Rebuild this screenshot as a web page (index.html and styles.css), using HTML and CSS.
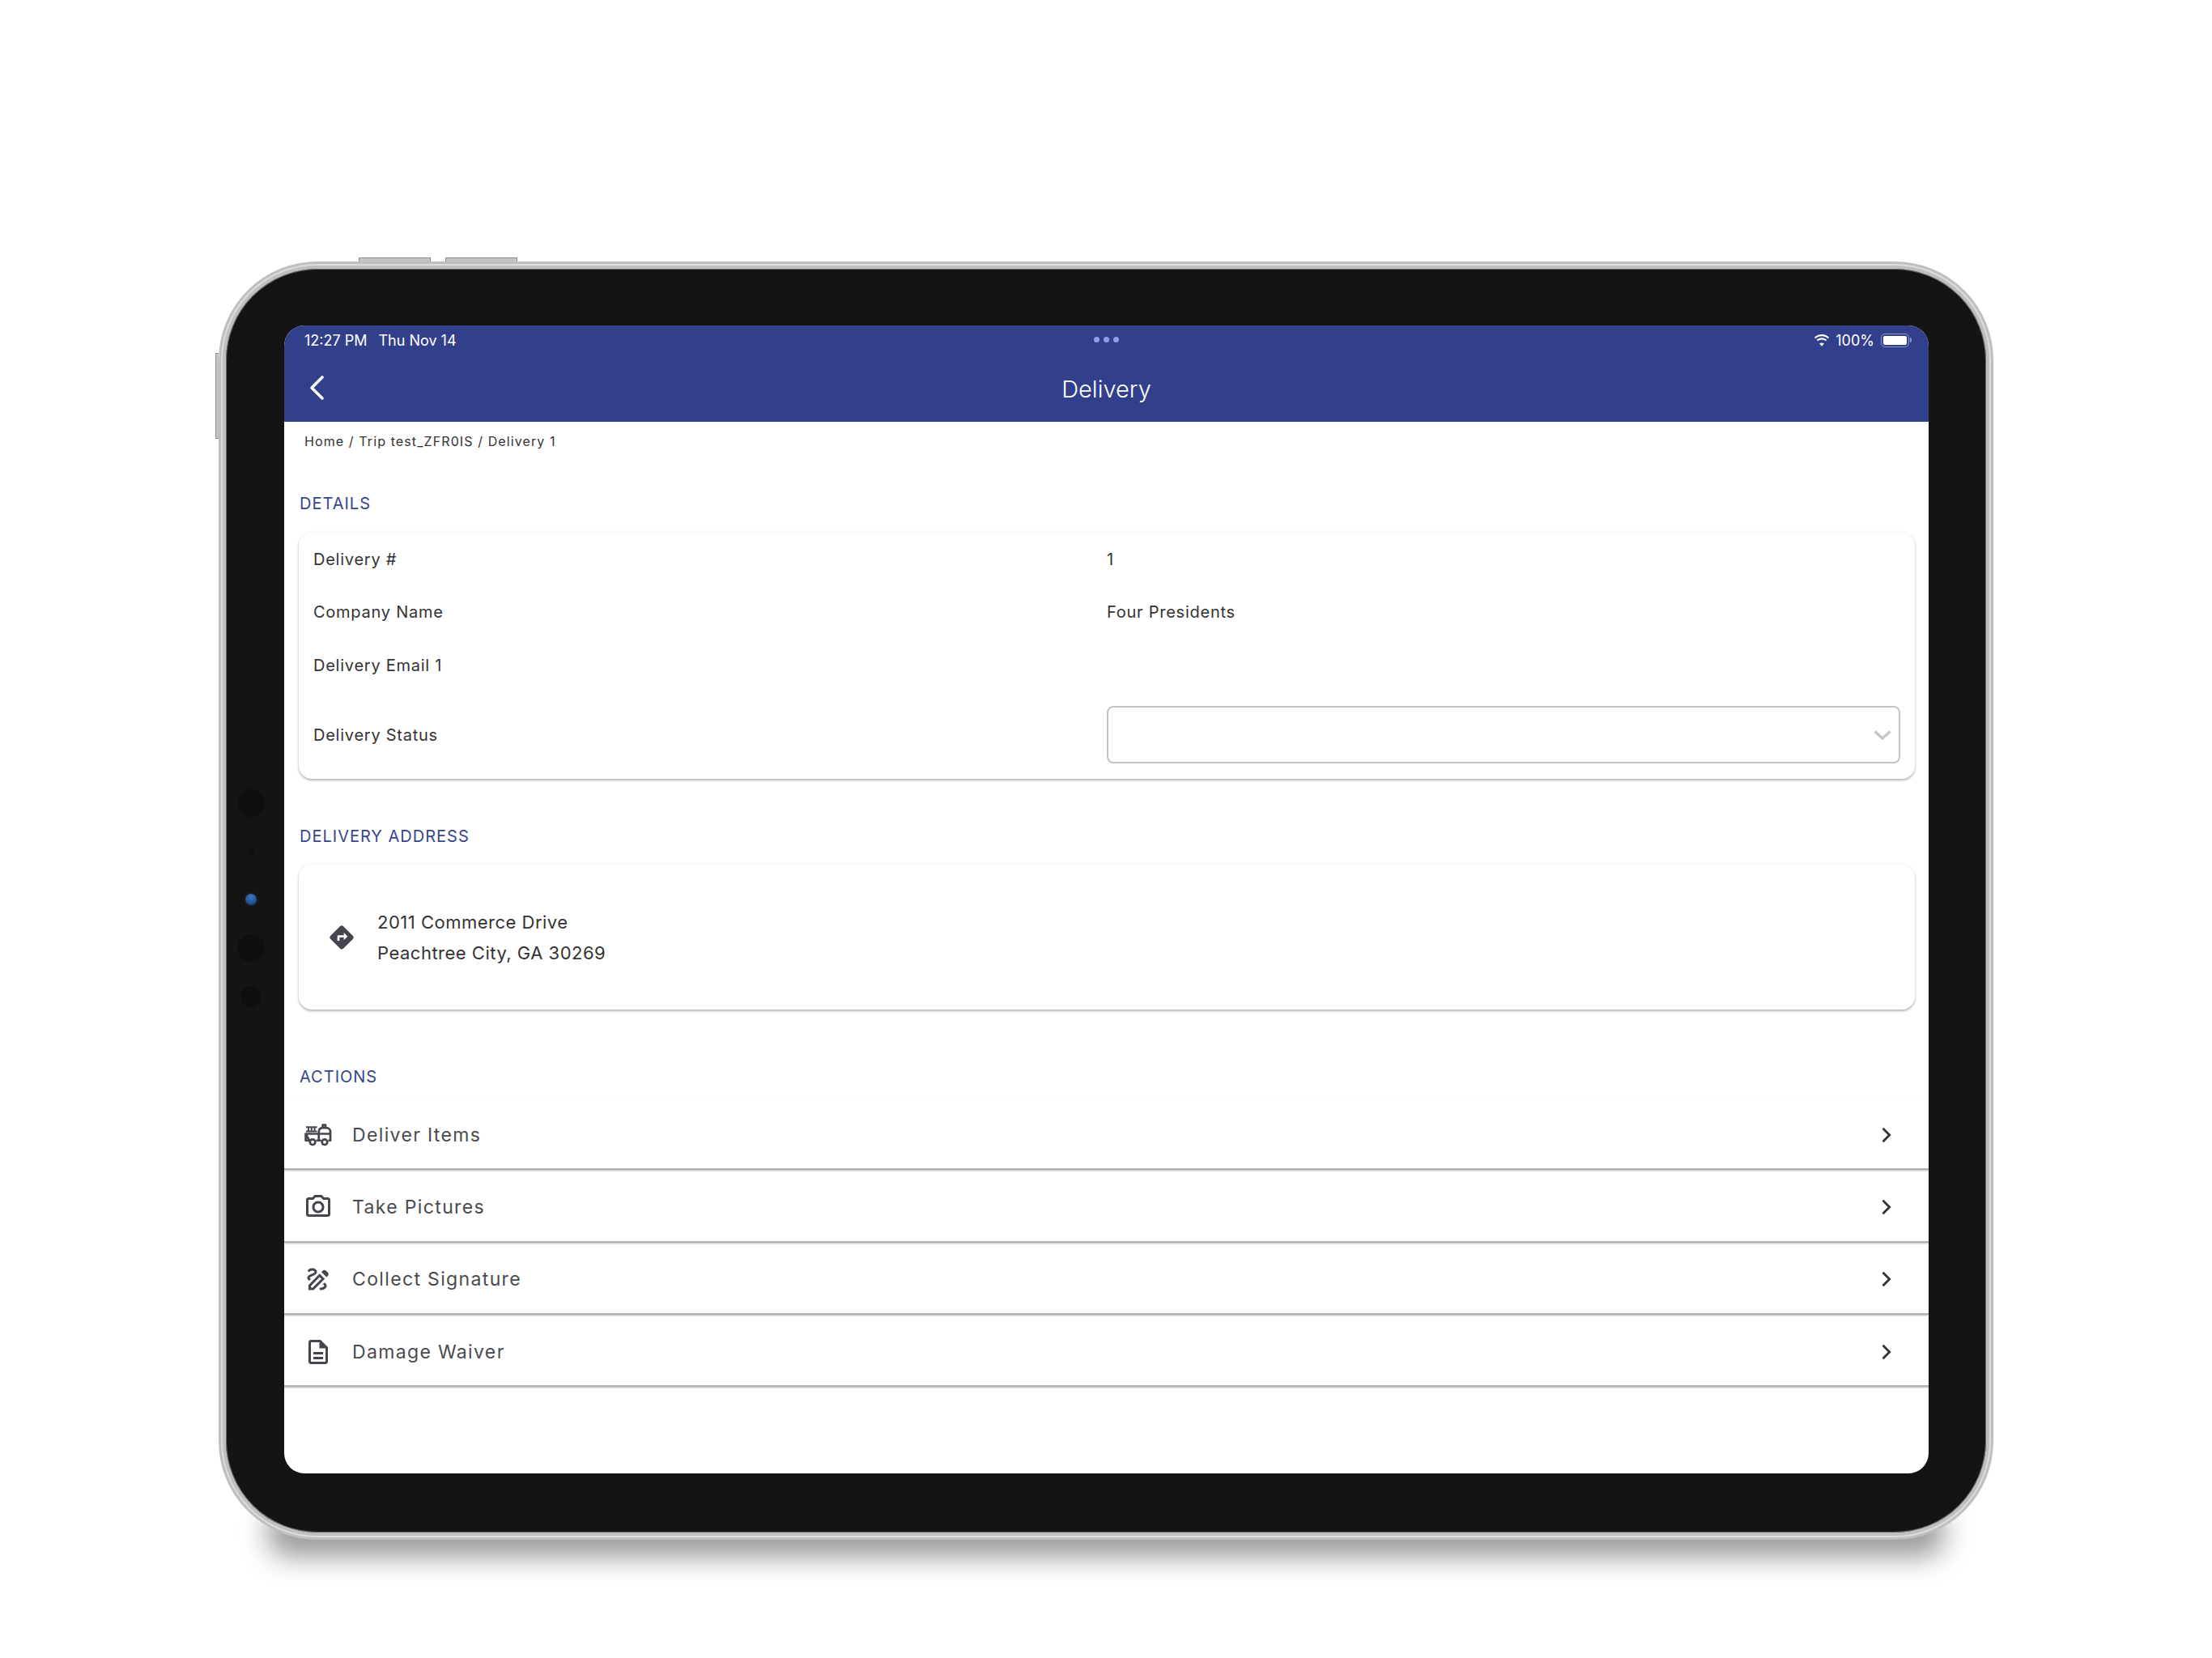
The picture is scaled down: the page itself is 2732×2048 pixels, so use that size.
FILE: index.html
```html
<!DOCTYPE html>
<html lang="en">
<head>
    <meta charset="UTF-8">
    <meta name="viewport" content="width=device-width, initial-scale=1.0">
    <title>Delivery</title>
    <link rel="stylesheet" href="styles.css">
</head>
<body>
    <div class="device">
        <span class="hw-btn hw-top-a"></span>
        <span class="hw-btn hw-top-b"></span>
        <span class="hw-btn hw-side"></span>
        <div class="sensors">
            <span class="lens lens-lg"></span>
            <span class="lens lens-xs"></span>
            <span class="lens lens-cam"></span>
            <span class="lens lens-lg lens-lg2"></span>
            <span class="lens lens-md"></span>
        </div>
        <div class="screen">
            <header class="appbar">
                <div class="status">
                    <div class="status-left"><span>12:27 PM</span><span>Thu Nov 14</span></div>
                    <div class="status-dots"><i></i><i></i><i></i></div>
                    <div class="status-right">
                        <svg class="wifi" viewBox="0 0 20 15" width="20" height="15"><path fill="#fff" d="M10 2.200c3 0 5.700 1.200 7.700 3.100l1.500-1.600C16.800 1.400 13.600 0 10 0S3.200 1.400.8 3.700l1.500 1.600C4.300 3.400 7 2.200 10 2.200zm0 4.200c1.800 0 3.500.7 4.800 1.900l1.500-1.600C14.600 5.100 12.400 4.200 10 4.200s-4.600.9-6.300 2.500l1.500 1.600C6.500 7.100 8.200 6.400 10 6.400zm0 4.100c-1.100 0-2.100.4-2.900 1.100L10 14.700l2.900-3.100c-.8-.7-1.800-1.100-2.900-1.100z"/></svg>
                        <span>100%</span>
                        <span class="battery"><b></b></span>
                        <span class="battery-tip"></span>
                    </div>
                </div>
                <div class="navbar">
                    <svg class="back" viewBox="0 0 20 32" width="20" height="32"><path d="M17 3 4 16l13 13" fill="none" stroke="#fff" stroke-width="3.600" stroke-linecap="round" stroke-linejoin="round"/></svg>
                    <h1>Delivery</h1>
                </div>
            </header>

            <div class="crumbs">Home / Trip test_ZFR0IS / Delivery 1</div>

            <h2 class="section section-details">DETAILS</h2>
            <div class="card details">
                <div class="row"><span>Delivery #</span><span>1</span></div>
                <div class="row"><span>Company Name</span><span>Four Presidents</span></div>
                <div class="row"><span>Delivery Email 1</span><span></span></div>
                <div class="row row-status">
                    <span>Delivery Status</span>
                    <div class="select">
                        <svg viewBox="0 0 24 14" width="24" height="14"><path d="M2.500 2.500 12 11l9.500-8.500" fill="none" stroke="#c6c6c6" stroke-width="3.400"/></svg>
                    </div>
                </div>
            </div>

            <h2 class="section section-address">DELIVERY ADDRESS</h2>
            <div class="card address">
                <svg viewBox="0 0 24 24" width="32" height="32"><path fill="#45444f" d="M22.430 10.590l-9.010-9.010c-.75-.75-2.070-.76-2.830 0l-9 9c-.78.78-.78 2.040 0 2.820l9 9c.39.39.9.58 1.410.58.51 0 1.020-.19 1.410-.58l8.990-8.990c.79-.76.8-2.020.03-2.820zM14 14.500V12h-4v3H8v-4c0-.55.45-1 1-1h5V7.500l3.500 3.500-3.500 3.500z"/></svg>
                <p>2011 Commerce Drive<br>Peachtree City, GA 30269</p>
            </div>

            <h2 class="section section-actions">ACTIONS</h2>
            <ul class="actions">
                <li>
                    <svg class="icon" viewBox="0 0 24 24"><path d="M2 5.500h9M2 9h9M4 5.500V9M6.500 5.500V9M9 5.500V9" fill="none" stroke="#45454d" stroke-width="1.300"/><path d="M1.700 11H22v5.500h-1.700M14.500 16.500h-4.200M4.700 16.500h-3V11zM12.500 11v5.500M12.500 11V9a3.300 3.300 0 0 1 3-2.900h3.300a3.300 3.300 0 0 1 3.200 3V11M15.700 6V3.800h2.300V6" fill="none" stroke="#45454d" stroke-width="1.800" stroke-linejoin="round"/><circle cx="7.400" cy="17.800" r="2.200" fill="none" stroke="#45454d" stroke-width="1.800"/><circle cx="17.300" cy="17.800" r="2.200" fill="none" stroke="#45454d" stroke-width="1.800"/></svg>
                    <span>Deliver Items</span>
                    <svg class="chev" viewBox="0 0 24 24"><path d="M9 5l7 7-7 7" fill="none" stroke="#333" stroke-width="2.400"/></svg>
                </li>
                <li>
                    <svg class="icon" viewBox="0 0 24 24"><path fill="#45454d" d="M14.120 4l1.830 2H20v12H4V6h4.050l1.830-2h4.240M15 2H9L7.170 4H4c-1.100 0-2 .9-2 2v12c0 1.100.9 2 2 2h16c1.100 0 2-.9 2-2V6c0-1.100-.9-2-2-2h-3.170L15 2zm-3 7c1.650 0 3 1.350 3 3s-1.350 3-3 3-3-1.350-3-3 1.350-3 3-3m0-2c-2.760 0-5 2.240-5 5s2.240 5 5 5 5-2.240 5-5-2.240-5-5-5z"/></svg>
                    <span>Take Pictures</span>
                    <svg class="chev" viewBox="0 0 24 24"><path d="M9 5l7 7-7 7" fill="none" stroke="#333" stroke-width="2.400"/></svg>
                </li>
                <li>
                    <svg class="icon" viewBox="0 0 24 24"><path fill="#45454d" d="M18.850 10.390l1.060-1.060c.78-.78.78-2.050 0-2.830L18.500 5.090c-.78-.78-2.050-.78-2.830 0l-1.060 1.060 4.240 4.240zM14.610 11.810L7.410 19H6v-1.410l7.190-7.190 1.420 1.410zM13.190 7.560L4 16.760V21h4.240l9.190-9.190-4.240-4.250zM19 17.500c0 2.190-2.540 3.500-5 3.500-.55 0-1-.45-1-1s.45-1 1-1c1.540 0 3-.73 3-1.500 0-.47-.48-.87-1.230-1.200l1.480-1.480c1.070.63 1.750 1.470 1.750 2.680zM4.580 13.350C3.610 12.790 3 12.060 3 11c0-1.800 1.890-2.630 3.560-3.360C7.590 7.180 9 6.560 9 6c0-.41-.78-1-2-1-1.260 0-1.800.61-1.830.64-.35.41-.98.46-1.400.12-.41-.34-.49-.95-.15-1.380C3.730 4.240 4.760 3 7 3s4 1.320 4 3c0 1.870-1.930 2.720-3.640 3.470C6.420 9.880 5 10.500 5 11c0 .31.43.6 1.070.86l-1.490 1.490z"/></svg>
                    <span>Collect Signature</span>
                    <svg class="chev" viewBox="0 0 24 24"><path d="M9 5l7 7-7 7" fill="none" stroke="#333" stroke-width="2.400"/></svg>
                </li>
                <li>
                    <svg class="icon" viewBox="0 0 24 24"><path fill="#45454d" d="M8 16h8v2H8zm0-4h8v2H8zm6-10H6c-1.100 0-2 .9-2 2v16c0 1.100.89 2 1.990 2H18c1.100 0 2-.9 2-2V8l-6-6zm4 18H6V4h7v5h5v11z"/></svg>
                    <span>Damage Waiver</span>
                    <svg class="chev" viewBox="0 0 24 24"><path d="M9 5l7 7-7 7" fill="none" stroke="#333" stroke-width="2.400"/></svg>
                </li>
            </ul>
        </div>
    </div>
</body>
</html>
```

FILE: styles.css
```css
* { box-sizing: border-box; }
body {
    margin: 0;
    padding-top: 323px;
    height: 2048px;
    overflow: hidden;
    display: flex;
    justify-content: center;
    align-items: flex-start;
    background: white;
    font-family: Inter, "Liberation Sans", sans-serif;
}

/* tablet frame */
.device {
    position: relative;
    width: 2192px;
    height: 1579px;
    padding: 70px 71px 73px 72px;
    background: #141414;
    border: 9px solid #bfbfc1;
    border-radius: 122px;
    box-shadow: inset 0 0 0 1px #6a6a6c;
}
/* lighter stripe along the metal edge */
.device::before {
    content: "";
    position: absolute;
    inset: -6px;
    border: 2px solid #dcdcde;
    border-radius: 119px;
}
/* soft shadow under the tablet */
.device::after {
    content: "";
    position: absolute;
    z-index: -1;
    left: 50px;
    right: 50px;
    bottom: -30px;
    height: 60px;
    background: rgba(0, 0, 0, 0.4);
    border-radius: 30px;
    filter: blur(17px);
}
.hw-btn { position: absolute; background: #c4c4c6; border: 1px solid #8d8d8f; border-bottom: 0; }
.hw-top-a { top: -14px; left: 164px; width: 89px; height: 5px; }
.hw-top-b { top: -14px; left: 271px; width: 89px; height: 5px; }
.hw-side { top: 104px; left: -13px; width: 4px; height: 106px; border-bottom: 1px solid #8d8d8f; border-right: 0; }

.sensors {
    position: absolute;
    left: 13px;
    top: 643px;
    width: 36px;
    display: flex;
    flex-direction: column;
    align-items: center;
}
.lens { display: block; border-radius: 50%; background: #0e0e0e; }
.lens-lg { width: 34px; height: 34px; }
.lens-xs { width: 7px; height: 7px; margin-top: 40px; }
.lens-cam {
    width: 14px;
    height: 14px;
    margin-top: 48px;
    background: radial-gradient(circle at 50% 30%, #3a78c0, #123a78);
    box-shadow: 0 0 3px 2px #1d1d1d;
}
.lens-lg2 { margin-top: 36px; }
.lens-md { width: 26px; height: 26px; margin-top: 30px; }

.screen {
    position: relative;
    height: 100%;
    background: white;
    border-radius: 25px;
    overflow: hidden;
    color: #333;
}

/* app bar */
.appbar { height: 119px; background: #32408b; color: white; }
.status {
    position: relative;
    height: 36px;
    padding: 0 21px 0 25px;
    display: flex;
    justify-content: space-between;
    align-items: center;
    font-size: 18px;
}
.status-left { display: flex; gap: 14px; }
.status-dots { position: absolute; left: 1000px; top: 14px; display: flex; gap: 5px; }
.status-dots i { width: 7px; height: 7px; border-radius: 50%; background: #8f9cec; }
.status-right { display: flex; align-items: center; gap: 7px; }
.battery {
    width: 35px;
    height: 17px;
    margin-left: 1px;
    padding: 2px;
    border: 1px solid #8e97cc;
    border-radius: 5px;
    display: flex;
}
.battery b { flex: 1; background: white; border-radius: 2px; }
.battery-tip { width: 2px; height: 6px; margin-left: -6px; background: #8e97cc; border-radius: 0 2px 2px 0; }

.navbar {
    position: relative;
    height: 83px;
    display: flex;
    align-items: center;
    justify-content: center;
    padding-top: 2px;
}
.navbar h1 { margin: 0; font-size: 29px; font-weight: 300; }
.back { position: absolute; left: 30px; top: 25px; }

.crumbs {
    height: 48px;
    padding-left: 25px;
    display: flex;
    align-items: center;
    font-size: 16px;
    letter-spacing: 1.1px;
    color: #333;
}

.section {
    margin: 0 0 0 19px;
    height: 24px;
    line-height: 24px;
    font-size: 20px;
    font-weight: 400;
    letter-spacing: 1px;
    color: #35468f;
}
.section-details { margin-top: 41px; margin-bottom: 24px; }
.section-address { margin-top: 59px; margin-bottom: 23px; }
.section-actions { margin-top: 71px; margin-bottom: 14px; }

.card {
    width: 1996px;
    margin-left: 18px;
    background: white;
    border-radius: 16px;
    box-shadow: 0 2px 3px rgba(0, 0, 0, 0.28), 0 0 5px rgba(0, 0, 0, 0.05);
}
.row {
    display: grid;
    grid-template-columns: 980px 1fr;
    align-items: center;
    height: 65.500px;
    padding: 0 18px;
    font-size: 20px;
    letter-spacing: 0.75px;
}
.row-status { height: 107.500px; }
.select {
    height: 71px;
    margin-top: -1px;
    border: 2px solid #c4c4c4;
    border-radius: 8px;
    display: flex;
    align-items: center;
    justify-content: flex-end;
    padding-right: 8px;
}

.address {
    height: 179px;
    padding: 1px 0 0 37px;
    display: flex;
    align-items: center;
    gap: 28px;
}
.address p { margin: 0; font-size: 22px; line-height: 38px; letter-spacing: 0.5px; }

.actions { margin: 0; padding: 0; list-style: none; }
.actions li {
    height: 89.300px;
    padding: 4px 39px 0 24px;
    display: flex;
    align-items: center;
    gap: 24px;
    border-bottom: 2px solid #b4b4b4;
    box-shadow: 0 1px 2px rgba(0, 0, 0, 0.3);
    font-size: 23px;
    letter-spacing: 1.35px;
    color: #4a4a4f;
}
.actions li span { flex: 1; }
.icon { width: 36px; height: 36px; }
.chev { width: 28px; height: 28px; }
```
